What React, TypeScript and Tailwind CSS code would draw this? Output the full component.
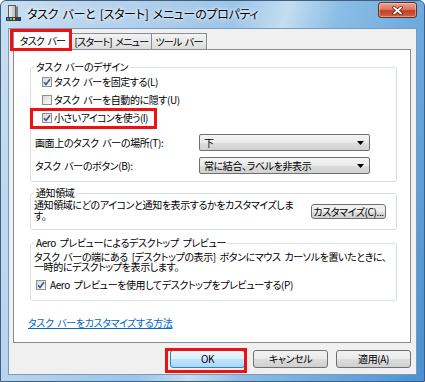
import type { ReactNode } from 'react';

function TitleIcon() {
  return (
    <svg width="15" height="16" viewBox="0 0 15 16" className="ml-[5px] mt-[4px] shrink-0">
      <defs>
        <linearGradient id="tower" x1="0" y1="0" x2="1" y2="0">
          <stop offset="0" stopColor="#f4f4f4" />
          <stop offset="1" stopColor="#b9b9b9" />
        </linearGradient>
      </defs>
      <rect x="2.5" y="0.5" width="7" height="12" fill="url(#tower)" stroke="#5b5b5b" />
      <rect x="10" y="1.5" width="2" height="11" fill="#7a7a7a" />
      <rect x="0" y="12" width="15" height="4" fill="#2f3d50" />
      <rect x="1" y="13" width="2" height="2" fill="#3b86e0" />
      <rect x="4" y="13" width="2" height="2" fill="#5fc050" />
      <rect x="7" y="13" width="2" height="2" fill="#f0c23a" />
    </svg>
  );
}

function CloseButton() {
  return (
    <div className="ml-auto mr-[7px] mt-[1px] flex h-[16px] w-[39px] items-center justify-center rounded-[3px] border border-[#6d2a1f] bg-[linear-gradient(#eaa292_0%,#d97a63_45%,#c23d25_55%,#cf6546_100%)] shadow-[inset_0_0_0_1px_rgba(255,255,255,0.35)]">
      <svg width="11" height="9" viewBox="0 0 11 9">
        <path d="M2 1.5 L9 7.5 M9 1.5 L2 7.5" stroke="#5a1a10" strokeWidth="3.4" strokeLinecap="round" />
        <path d="M2 1.5 L9 7.5 M9 1.5 L2 7.5" stroke="#ffffff" strokeWidth="1.9" strokeLinecap="round" />
      </svg>
    </div>
  );
}

function Check({ checked = false }: { checked?: boolean }) {
  return (
    <span className="flex h-[10px] w-[10px] shrink-0 items-center justify-center border border-[#8e8f8f] bg-[linear-gradient(135deg,#d8d8d8,#fbfbfb)]">
      {checked && (
        <svg width="8" height="8" viewBox="0 0 8 8">
          <path d="M1 4.2 L3 6.4 L7 1.2" fill="none" stroke="#3f5590" strokeWidth="1.6" />
        </svg>
      )}
    </span>
  );
}

function Combo({ value }: { value: string }) {
  return (
    <div className="flex h-[17px] w-[171px] items-center justify-between rounded-[2px] border border-[#707070] bg-[linear-gradient(#f3f3f3_0%,#ebebeb_50%,#dddddd_51%,#d0d0d0_100%)] pl-[4px] pr-[5px]">
      <span>{value}</span>
      <svg width="7" height="4" viewBox="0 0 7 4">
        <path d="M0 0h7L3.5 4z" fill="#000" />
      </svg>
    </div>
  );
}

function Button({ children, primary = false }: { children: ReactNode; primary?: boolean }) {
  return (
    <div
      className={
        primary
          ? 'flex h-[18px] w-[75px] items-center justify-center rounded-[3px] border border-[#3c7fb1] bg-[linear-gradient(#eaf6fd_0%,#d9f0fc_50%,#bee6fd_51%,#a7d9f5_100%)]'
          : 'flex h-[18px] w-[75px] items-center justify-center rounded-[3px] border border-[#707070] bg-[linear-gradient(#f2f2f2_0%,#ebebeb_50%,#dddddd_51%,#cfcfcf_100%)]'
      }
    >
      {children}
    </div>
  );
}

export default function App() {
  return (
    <div className="h-[382px] w-[425px] overflow-hidden rounded-t-[6px] border border-[#3f5f80] bg-[linear-gradient(105deg,#c8def1_0%,#b3d1ec_25%,#9cc5e8_45%,#c4ddf0_55%,#8bbde6_65%,#5c9fd9_90%,#4a8fd0_100%)] font-['Noto_Sans_CJK_JP',sans-serif] text-[10px] leading-[12px] tracking-[-0.4px] text-black [font-feature-settings:'palt'] [word-spacing:2px]">
      {/* title bar */}
      <div className="flex h-[27px] items-start">
        <TitleIcon />
        <span className="ml-[6px] mt-[5px] whitespace-nowrap text-[12px] leading-[16px] tracking-[-0.3px] [text-shadow:0_0_6px_#fff,0_0_3px_#fff]">
          タスク バーと [スタート] メニューのプロパティ
        </span>
        <CloseButton />
      </div>

      {/* client area */}
      <div className="mx-[7px] flex h-[347px] flex-col border border-[#7d99b8] bg-[#f0f0f0]">
        {/* tabs */}
        <div className="mt-[2px] flex h-[18px] items-end pl-[4px] tracking-[-0.8px]">
          <div className="relative z-10 -mb-[1px] flex h-[19px] w-[59px] items-center justify-center whitespace-nowrap border border-b-0 border-[#898c95] bg-white">
            タスク バー
            <div className="absolute -bottom-[1px] -left-[4px] -right-[1px] -top-[3px] border-[3px] border-[#ee1111]" />
          </div>
          <div className="flex h-[16px] w-[80px] items-center justify-center whitespace-nowrap border border-b-0 border-l-0 border-[#898c95] bg-[linear-gradient(#f3f3f3,#dcdcdc)]">
            [スタート] メニュー
          </div>
          <div className="flex h-[16px] w-[55px] items-center justify-center whitespace-nowrap border border-b-0 border-l-0 border-[#898c95] bg-[linear-gradient(#f3f3f3,#dcdcdc)]">
            ツール バー
          </div>
        </div>

        {/* tab panel */}
        <div className="ml-[4px] mr-[5px] h-[294px] border border-[#898c95] bg-white pl-[16px] pr-[13px] pt-[11px]">
          <fieldset className="rounded-[3px] border border-[#d5dfe5] pb-[7px]">
            <legend className="ml-[3px] px-[2px] leading-[12px]">タスク バーのデザイン</legend>
            <div className="flex flex-col pl-[11px]">
              <div className="flex h-[18px] items-center gap-[2px]">
                <Check checked />
                <span>タスク バーを固定する(L)</span>
              </div>
              <div className="flex h-[18px] items-center gap-[2px]">
                <Check />
                <span>タスク バーを自動的に隠す(U)</span>
              </div>
              <div className="relative flex h-[18px] w-[115px] items-center gap-[2px]">
                <Check checked />
                <span className="whitespace-nowrap tracking-[-0.6px]">小さいアイコンを使う(I)</span>
                <div className="absolute -bottom-[2px] -left-[12px] -top-[1px] right-0 border-[3px] border-[#ee1111]" />
              </div>
            </div>
            <div className="mt-[7px] flex h-[17px] items-center">
              <span className="w-[168px] pl-[4px]">画面上のタスク バーの場所(T):</span>
              <Combo value="下" />
            </div>
            <div className="mt-[6px] flex h-[17px] items-center">
              <span className="w-[168px] pl-[4px]">タスク バーのボタン(B):</span>
              <Combo value="常に結合、ラベルを非表示" />
            </div>
          </fieldset>

          <fieldset className="mt-[5px] rounded-[3px] border border-[#d5dfe5] pb-[8px]">
            <legend className="ml-[3px] px-[2px] leading-[12px]">通知領域</legend>
            <div className="flex items-start pl-[3px] pr-[10px]">
              <p className="whitespace-nowrap leading-[11px]">
                通知領域にどのアイコンと通知を表示するかをカスタマイズしま
                <br />
                す。
              </p>
              <div className="ml-auto mt-[5px] flex h-[15px] w-[75px] shrink-0 items-center justify-center whitespace-nowrap rounded-[3px] border border-[#707070] bg-[linear-gradient(#f2f2f2_0%,#ebebeb_50%,#dddddd_51%,#cfcfcf_100%)]">
                カスタマイズ(C)...
              </div>
            </div>
          </fieldset>

          <fieldset className="mt-[7px] rounded-[3px] border border-[#d5dfe5] pb-[6px]">
            <legend className="ml-[3px] px-[2px] leading-[12px]">Aero プレビューによるデスクトップ プレビュー</legend>
            <p className="whitespace-nowrap pl-[3px] pt-[3px] leading-[10px]">
              タスク バーの端にある [デスクトップの表示] ボタンにマウス カーソルを置いたときに、
              <br />
              一時的にデスクトップを表示します。
            </p>
            <div className="mt-[4px] flex h-[18px] items-center gap-[4px] pl-[5px]">
              <Check checked />
              <span>Aero プレビューを使用してデスクトップをプレビューする(P)</span>
            </div>
          </fieldset>

          <div className="-ml-[2px] mt-[16px] leading-[12px] text-[#0066cc] underline">
            タスク バーをカスタマイズする方法
          </div>
        </div>

        {/* dialog buttons */}
        <div className="mt-[7px] flex justify-end gap-[8px] pr-[5px]">
          <div className="relative">
            <Button primary>OK</Button>
            <div className="absolute -bottom-[5px] -left-[5px] -right-[2px] -top-[2px] border-[3px] border-[#ee1111]" />
          </div>
          <Button>キャンセル</Button>
          <Button>適用(A)</Button>
        </div>
      </div>
    </div>
  );
}
